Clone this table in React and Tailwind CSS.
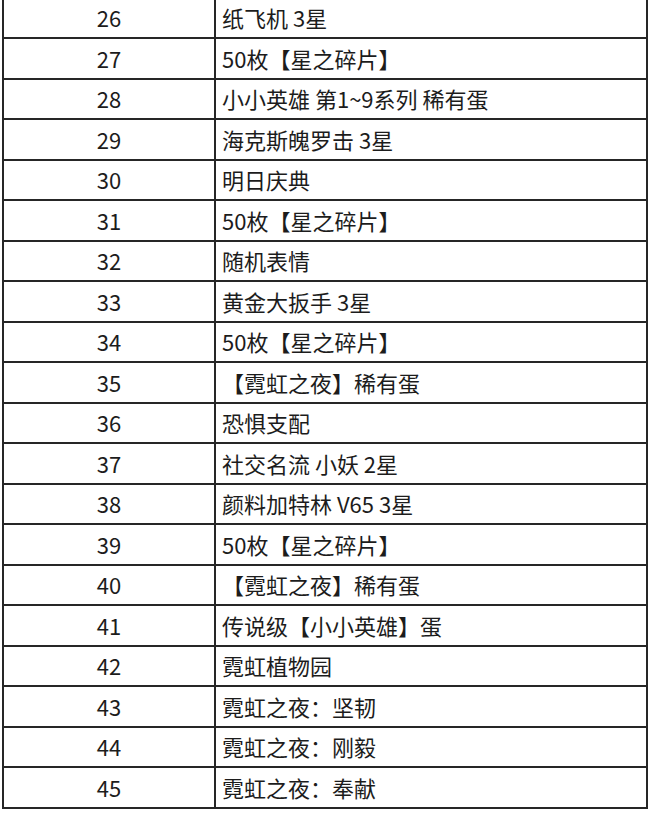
const rows = [
  [26, '纸飞机 3星'],
  [27, '50枚【星之碎片】'],
  [28, '小小英雄 第1~9系列 稀有蛋'],
  [29, '海克斯魄罗击 3星'],
  [30, '明日庆典'],
  [31, '50枚【星之碎片】'],
  [32, '随机表情'],
  [33, '黄金大扳手 3星'],
  [34, '50枚【星之碎片】'],
  [35, '【霓虹之夜】稀有蛋'],
  [36, '恐惧支配'],
  [37, '社交名流 小妖 2星'],
  [38, '颜料加特林 V65 3星'],
  [39, '50枚【星之碎片】'],
  [40, '【霓虹之夜】稀有蛋'],
  [41, '传说级【小小英雄】蛋'],
  [42, '霓虹植物园'],
  [43, '霓虹之夜：坚韧'],
  [44, '霓虹之夜：刚毅'],
  [45, '霓虹之夜：奉献'],
]

export default function App() {
  return (
    <div className="w-[651px] h-[813px] overflow-hidden bg-white">
      <div
        className="ml-[2px] mt-[-3.5px] w-[646px] border-x-2 border-b-2 border-[#262626] text-[22px] text-[#1c1c1c]"
        style={{ fontFamily: '"Noto Sans CJK SC", "Noto Sans", sans-serif' }}
      >
        {rows.map(([n, name]) => (
          <div key={n} className="grid grid-cols-[210px_1fr] h-[40.5px] border-t-2 border-[#262626]">
            <div className="flex items-center justify-center">{n}</div>
            <div className="flex items-center border-l-2 border-[#262626] pl-[6px] whitespace-nowrap">{name}</div>
          </div>
        ))}
      </div>
    </div>
  )
}
